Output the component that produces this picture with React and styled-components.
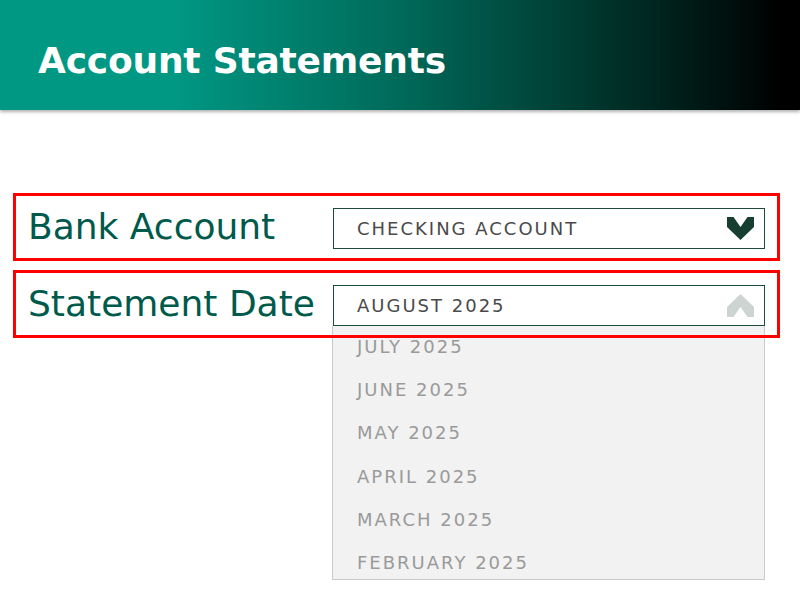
import React from "react";
import styled, { createGlobalStyle } from "styled-components";

const months = [
  "JULY 2025",
  "JUNE 2025",
  "MAY 2025",
  "APRIL 2025",
  "MARCH 2025",
  "FEBRUARY 2025",
];

const Chevron = ({ up, color }) => (
  <svg width="27" height="23" viewBox="0 0 27 23">
    <polygon
      points="0,0 6.5,0 13.5,10 20.5,0 27,0 27,10 13.5,23 0,10"
      fill={color}
      transform={up ? "translate(0 23) scale(1 -1)" : undefined}
    />
  </svg>
);

export default () => (
  <Page>
    <Global />
    <Header>
      <Title>Account Statements</Title>
    </Header>
    <Form>
      <Row>
        <Label>Bank Account</Label>
        <SelectWrap>
          <Select>
            <Value>CHECKING ACCOUNT</Value>
            <Chevron color="#173f31" />
          </Select>
        </SelectWrap>
      </Row>
      <Row>
        <Label>Statement Date</Label>
        <SelectWrap>
          <Select>
            <Value>AUGUST 2025</Value>
            <Chevron up color="#cdd4d1" />
          </Select>
          <List>
            {months.map(m => (
              <Item key={m}>{m}</Item>
            ))}
          </List>
        </SelectWrap>
      </Row>
    </Form>
  </Page>
);

const Global = createGlobalStyle`
  body {
    margin: 0;
    background: #fff;
    font-family: "DejaVu Sans", Verdana, sans-serif;
  }
`;

const Page = styled("div")`
  min-height: 606px;
  background: #fff;
`;

const Header = styled("header")`
  height: 110px;
  display: flex;
  align-items: center;
  padding: 10px 0 0 38px;
  box-sizing: border-box;
  background: linear-gradient(to right, #009783 22%, #006a5a 50%, #00352c 75%, #000 98%);
  box-shadow: 0 2px 3px rgba(0, 0, 0, 0.3);
`;

const Title = styled("h1")`
  margin: 0;
  color: #fff;
  font-size: 36px;
  font-weight: 700;
  letter-spacing: -0.2px;
`;

const Form = styled("div")`
  margin: 83px 20px 0 13px;
  display: flex;
  flex-direction: column;
  gap: 9px;
`;

const Row = styled("div")`
  position: relative;
  height: 68px;
  box-sizing: border-box;
  padding: 15px 15px 0 15px;
  display: flex;
  align-items: flex-start;
  &::after {
    content: "";
    position: absolute;
    inset: 0;
    border: 3px solid #f00;
    z-index: 3;
    pointer-events: none;
  }
`;

const Label = styled("div")`
  width: 305px;
  flex: none;
  color: #005a4b;
  font-size: 36px;
  line-height: 38px;
`;

const SelectWrap = styled("div")`
  position: relative;
  flex: 1;
`;

const Select = styled("div")`
  height: 41px;
  box-sizing: border-box;
  border: 1px solid #1c4a3c;
  background: #fff;
  display: flex;
  align-items: center;
  justify-content: space-between;
  padding: 0 10px 0 23px;
`;

const Value = styled("span")`
  color: #4a4a4a;
  font-size: 18px;
  letter-spacing: 2px;
`;

const List = styled("div")`
  position: absolute;
  top: 41px;
  left: -1px;
  right: 0;
  height: 254px;
  overflow: hidden;
  box-sizing: border-box;
  background: #f1f2f1;
  border: 1px solid #c6cccb;
  border-top: none;
  z-index: 2;
`;

const Item = styled("div")`
  height: 43.2px;
  line-height: 41px;
  padding-left: 24px;
  color: #9a9a9a;
  font-size: 18px;
  letter-spacing: 2px;
`;
